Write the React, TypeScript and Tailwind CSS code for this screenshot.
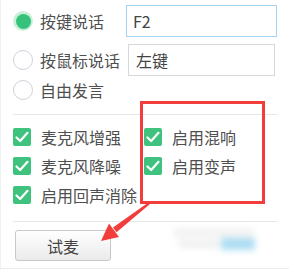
import React from "react";

const font = { fontFamily: '"Noto Sans CJK SC", "Noto Sans", sans-serif' };

function Radio({ checked }: { checked?: boolean }) {
  if (checked) {
    return (
      <span className="flex h-[20px] w-[20px] items-center justify-center rounded-full bg-[#c9efd9]">
        <span className="h-[15px] w-[15px] rounded-full bg-[#36c27a]" />
      </span>
    );
  }
  return <span className="h-[20px] w-[20px] rounded-full border-[1.5px] border-[#cdd3da] bg-white" />;
}

function Check({ label }: { label: string }) {
  return (
    <div className="flex h-[18px] items-center gap-[10px]">
      <span className="flex h-[18px] w-[18px] items-center justify-center rounded-[2px] bg-[#3ec27e]">
        <svg width="14" height="12" viewBox="0 0 14 12">
          <path d="M1.5 6.5 L5.2 10 L12.5 1.8" fill="none" stroke="white" strokeWidth="2.2" strokeLinecap="round" strokeLinejoin="round" />
        </svg>
      </span>
      <span className="text-[16px] leading-none text-[#4f4f4f]">{label}</span>
    </div>
  );
}

export default function App() {
  return (
    <div className="relative h-[270px] w-[289px] overflow-hidden border-l border-[#eef0f2] bg-white" style={font}>
      <div className="flex flex-col pl-[12px] pr-[12px] pt-[5px]">
        <div className="flex h-[32px] items-center">
          <Radio checked />
          <span className="ml-[7px] w-[86px] text-[16px] text-[#4f4f4f]">按键说话</span>
          <div className="flex h-[32px] w-[151px] items-center border-[1.5px] border-[#a6d3f3] pl-[6px] text-[16px] text-[#444]">F2</div>
        </div>
        <div className="mt-[7px] flex h-[32px] items-center">
          <Radio />
          <span className="ml-[7px] w-[88px] text-[16px] text-[#4f4f4f]">按鼠标说话</span>
          <div className="flex h-[32px] w-[147px] items-center border border-[#d5dadf] pl-[7px] text-[16px] text-[#444]">左键</div>
        </div>
        <div className="mt-[4px] flex h-[20px] items-center">
          <Radio />
          <span className="ml-[7px] text-[16px] text-[#4f4f4f]">自由发言</span>
        </div>
        <div className="mt-[14px] h-px w-[264px] bg-[#e4e7eb]" />
        <div className="mt-[13px] grid grid-cols-[131px_1fr] gap-y-[11px]">
          <Check label="麦克风增强" />
          <Check label="启用混响" />
          <Check label="麦克风降噪" />
          <Check label="启用变声" />
          <Check label="启用回声消除" />
        </div>
        <div className="mt-[17px] h-px w-[264px] bg-[#e4e7eb]" />
        <button className="ml-[2px] mt-[8px] flex h-[31px] w-[96px] items-center justify-center rounded-[3px] border border-[#c8c8c8] bg-gradient-to-b from-white to-[#ebebeb] text-[16px] text-[#444]">
          试麦
        </button>
      </div>

      <div className="absolute bottom-[1px] left-0 h-px w-full bg-[#e9ebee]" />

      <div className="pointer-events-none absolute left-[168px] top-[222px] h-[40px] w-[95px] opacity-70 blur-[3px]">
        <div className="absolute left-[5px] top-[6px] h-[10px] w-[80px] bg-[#eeeeee]" />
        <div className="absolute left-[10px] top-[18px] h-[8px] w-[40px] bg-[#eaeaea]" />
        <div className="absolute left-[52px] top-[16px] h-[12px] w-[34px] bg-[#8ccfee]" />
      </div>

      <div className="pointer-events-none absolute left-[139px] top-[101px] h-[103px] w-[125px] border-[3px] border-[#f23d3d]" />

      <svg className="pointer-events-none absolute left-0 top-0" width="289" height="270">
        <polygon points="149,204 147.4,202.6 112,227.5 115.5,232.2" fill="#f23d3d" />
        <polygon points="100,241 118,237 108,223.5" fill="#f23d3d" />
      </svg>
    </div>
  );
}
